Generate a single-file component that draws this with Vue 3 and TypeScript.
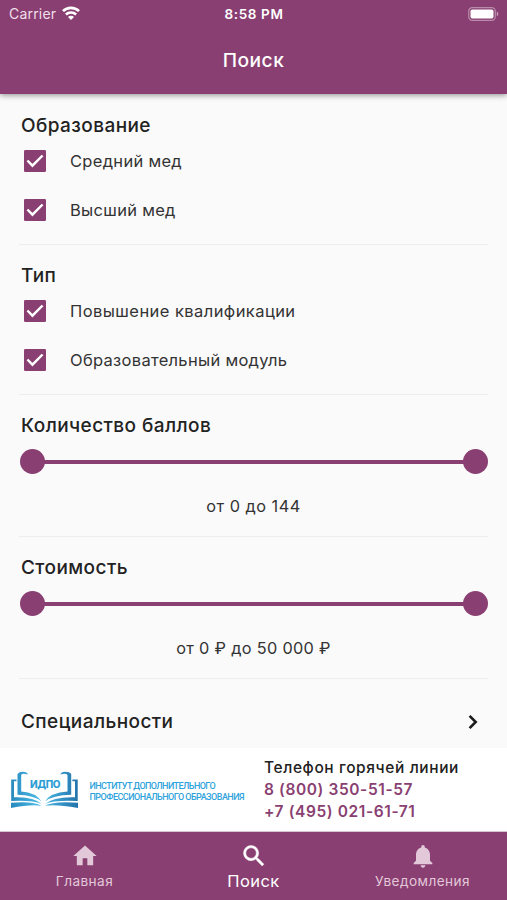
<script setup lang="ts">
interface CheckGroup {
  title: string
  cls: string
  options: { label: string; checked: boolean; cls: string }[]
}
interface RangeGroup {
  title: string
  value: string
  cls: string
}

const checkGroups: CheckGroup[] = [
  {
    title: 'Образование',
    cls: 'education',
    options: [
      { label: 'Средний мед', checked: true, cls: 'o1' },
      { label: 'Высший мед', checked: true, cls: 'o2' },
    ],
  },
  {
    title: 'Тип',
    cls: 'kind',
    options: [
      { label: 'Повышение квалификации', checked: true, cls: 'o3' },
      { label: 'Образовательный модуль', checked: true, cls: 'o4' },
    ],
  },
]

const rangeGroups: RangeGroup[] = [
  { title: 'Количество баллов', value: 'от 0 до 144', cls: 'points' },
  { title: 'Стоимость', value: 'от 0 ₽ до 50 000 ₽', cls: 'price' },
]
</script>

<template>
  <div class="screen">
    <header class="header">
      <div class="status">
        <div class="carrier">
          <span>Carrier</span>
          <svg class="wifi" viewBox="0 0 18 14" fill="none" stroke="#fff">
            <path d="M1 5.1a11.4 11.4 0 0 1 16 0" stroke-width="2.7" />
            <path d="M3.9 8.5a7.2 7.2 0 0 1 10.2 0" stroke-width="2.5" />
            <path d="M9 14 6 11a4.2 4.2 0 0 1 6 0z" fill="#fff" stroke="none" />
          </svg>
        </div>
        <span class="clock">8:58 PM</span>
        <div class="battery-wrap">
          <svg class="battery" viewBox="0 0 31 14">
            <rect x=".7" y=".7" width="26.6" height="12.6" rx="3.6" fill="none" stroke="#fff" stroke-opacity=".4" stroke-width="1.2" />
            <rect x="2.5" y="2.4" width="23" height="9.2" rx="1.8" fill="#fff" />
            <path d="M28.8 4.6c2 .9 2 3.9 0 4.8z" fill="#fff" fill-opacity=".5" />
          </svg>
        </div>
      </div>
      <h1 class="title">Поиск</h1>
    </header>

    <main class="content">
      <section v-for="g in checkGroups" :key="g.title" class="group checks" :class="g.cls">
        <h2>{{ g.title }}</h2>
        <label v-for="o in g.options" :key="o.label" class="option">
          <svg class="box" viewBox="3 3 18 18">
            <rect x="3" y="3" width="18" height="18" rx="1" fill="#8a3f72" />
            <path v-if="o.checked" d="M5.8 11.6l4.1 4.2 8.3-8.3" fill="none" stroke="#fff" stroke-width="2" />
          </svg>
          <span :class="o.cls">{{ o.label }}</span>
        </label>
      </section>

      <section v-for="r in rangeGroups" :key="r.title" class="group range" :class="r.cls">
        <h2>{{ r.title }}</h2>
        <div class="slider">
          <span class="thumb"></span>
          <span class="track"></span>
          <span class="thumb"></span>
        </div>
        <p class="value">{{ r.value }}</p>
      </section>

      <div class="link-row">
        <h2>Специальности</h2>
        <svg class="chevron" viewBox="0 0 10 16" fill="none" stroke="#1b1b1b" stroke-width="2.6">
          <path d="M1.6 1.9 7.7 8l-6.1 6.1" />
        </svg>
      </div>
    </main>

    <aside class="hotline">
      <div class="brand">
        <svg class="logo" viewBox="10 771 69 39">
          <defs>
            <linearGradient id="book" x1="10" x2="78" y1="0" y2="0" gradientUnits="userSpaceOnUse">
              <stop offset="0" stop-color="#2787bb" />
              <stop offset=".45" stop-color="#4dbdea" />
              <stop offset="1" stop-color="#2273ab" />
            </linearGradient>
          </defs>
          <g fill="url(#book)">
            <path d="M28 774.500Q22 772.800 21.200 775V791.500Q36 792.500 41.500 801.500 34 795.300 17.500 794.800V774Q19 771.800 23 771.800 27 771.900 28 774.500z" />
            <path d="M60.500 774.500Q66 772.800 67.500 775V791.500Q50.500 792.500 45 801.500 52.500 795.300 71.200 794.800V774Q69.500 771.800 65 771.800 61 771.900 60.500 774.500z" />
            <path d="M16.500 779.500V781.200H14V797.200Q34 796.500 41.500 804 33 800 11.200 801V779.500z" />
            <path d="M72.400 779.500V781.200H75V797.200Q53.500 796.500 45 804 53.500 800 77.700 801V779.500z" />
            <path d="M11 802.700Q33 800.700 41.500 805.800 31 804 11 808z" />
            <path d="M78 802.700Q53.500 800.700 45 805.800 55.500 804 78 808z" />
          </g>
          <text x="30" y="788" class="acronym">ИДПО</text>
        </svg>
        <div class="names">
          <span class="n1">ИНСТИТУТ ДОПОЛНИТЕЛЬНОГО</span>
          <span class="n2">ПРОФЕССИОНАЛЬНОГО ОБРАЗОВАНИЯ</span>
        </div>
      </div>
      <div class="phones">
        <span class="caption">Телефон горячей линии</span>
        <a class="p1">8 (800) 350-51-57</a>
        <a class="p2">+7 (495) 021-61-71</a>
      </div>
    </aside>

    <nav class="tabs">
      <div class="tab">
        <svg viewBox="0 0 24 24"><path d="M10 20v-6h4v6h5v-8h3L12 3 2 12h3v8z" /></svg>
        <span class="t1">Главная</span>
      </div>
      <div class="tab active">
        <svg viewBox="0 0 24 24" stroke="#fff" stroke-width=".4"><path d="M15.500 14h-.79l-.28-.27A6.471 6.471 0 0 0 16 9.500 6.500 6.500 0 1 0 9.500 16c1.610 0 3.090-.59 4.230-1.570l.27.28v.79l5 4.990L20.490 19l-4.990-5zm-6 0C7.010 14 5 11.990 5 9.500S7.010 5 9.500 5 14 7.010 14 9.500 11.990 14 9.500 14z" /></svg>
        <span class="t2">Поиск</span>
      </div>
      <div class="tab">
        <svg viewBox="0 0 24 24"><path d="M12 22c1.100 0 2-.9 2-2h-4c0 1.100.89 2 2 2zm6-6v-5c0-3.070-1.640-5.640-4.500-6.320V4c0-.83-.67-1.500-1.500-1.500s-1.500.67-1.500 1.500v.68C7.630 5.360 6 7.920 6 11v5l-2 2v1h16v-1l-2-2z" /></svg>
        <span class="t3">Уведомления</span>
      </div>
    </nav>
  </div>
</template>

<style>
body {
  margin: 0;
}
</style>

<style scoped>
.screen {
  width: 507px;
  height: 900px;
  display: flex;
  flex-direction: column;
  overflow: hidden;
  background: #fafafa;
  color: #222;
  font-family: Inter, 'Noto Sans', sans-serif;
}
h1,
h2,
p {
  margin: 0;
}
.header {
  flex: none;
  height: 94px;
  background: #8a3f72;
  color: #fff;
  box-shadow: 0 1px 6px rgba(0, 0, 0, 0.45);
}
.status {
  display: grid;
  grid-template-columns: 1fr auto 1fr;
  align-items: center;
  height: 27px;
  padding: 0 8px 0 9px;
}
.carrier {
  display: flex;
  align-items: center;
  gap: 6px;
  font-size: 14px;
  letter-spacing: 0.2px;
  color: #f0dfea;
}
.wifi {
  width: 18px;
  height: 14px;
  margin-top: -2px;
}
.clock {
  font-size: 13.5px;
  font-weight: 600;
  letter-spacing: 0.65px;
}
.battery-wrap {
  display: flex;
  justify-content: flex-end;
}
.battery {
  width: 31px;
  height: 14px;
}
.title {
  height: 66px;
  line-height: 67px;
  text-align: center;
  font-size: 19.2px;
  font-weight: 500;
  letter-spacing: 0.5px;
}
.content {
  flex: 1;
  min-height: 0;
  padding: 0 19px;
}
h2 {
  padding-left: 2px;
  font-size: 19px;
  line-height: 24px;
  font-weight: 500;
  letter-spacing: 0.42px;
}
.group {
  box-sizing: border-box;
  border-bottom: 1px solid #ededed;
}
.group h2 {
  line-height: 26px;
  margin-bottom: -2px;
}
.checks {
  height: 150px;
  padding-top: 18px;
}
.education {
  height: 151px;
  padding-top: 19px;
}
.option {
  display: flex;
  align-items: center;
  gap: 24px;
  height: 49px;
  padding-left: 5px;
  font-size: 16.5px;
  color: #333;
}
h2 + .option {
  height: 48px;
}
.box {
  width: 22px;
  height: 22px;
}
.o1,
.o2,
.o4 {
  letter-spacing: 0.3px;
}
.o3 {
  letter-spacing: 0.43px;
}
.range {
  height: 142px;
  padding-top: 18px;
}
.slider {
  display: flex;
  align-items: center;
  height: 25px;
  padding: 0 0 0 1px;
  margin-top: 14px;
}
.group h2 + .slider {
  margin-top: 12px;
}
.thumb {
  width: 25px;
  height: 25px;
  border-radius: 50%;
  background: #8a3f72;
}
.track {
  flex: 1;
  height: 4px;
  margin: 0 -2px;
  background: #8a3f72;
}
.range h2 {
  margin-bottom: 0;
}
.range h2 + .slider {
  margin-top: 10px;
}
.value {
  margin-top: 20px;
  line-height: 24px;
  text-align: center;
  font-size: 16.3px;
  letter-spacing: 0.5px;
  color: #333;
}
.price .value {
  letter-spacing: 0.32px;
}
.link-row {
  display: flex;
  align-items: center;
  justify-content: space-between;
  height: 86px;
  padding-right: 10px;
}
.chevron {
  width: 10px;
  height: 16px;
}
.hotline {
  flex: none;
  display: flex;
  height: 83px;
  border-bottom: 1px solid #d8c3d0;
  background: #fff;
}
.brand {
  display: flex;
  align-items: flex-start;
  width: 254px;
}
.logo {
  flex: none;
  width: 69px;
  height: 39px;
  margin: 23px 0 0 10px;
}
.acronym {
  font: 800 10px Inter, sans-serif;
  letter-spacing: -0.4px;
  fill: #2d9ed5;
}
.names {
  display: flex;
  flex-direction: column;
  margin: 33px 0 0 10.5px;
  font: 500 9px Roboto, sans-serif;
  line-height: 11px;
  white-space: nowrap;
  color: #2fa3dc;
}
.n1 {
  letter-spacing: -0.57px;
}
.n2 {
  letter-spacing: -0.52px;
}
.phones {
  display: flex;
  flex-direction: column;
  padding: 9px 0 0 10px;
  font-size: 15.5px;
  line-height: 22px;
  font-weight: 600;
  letter-spacing: 0.6px;
  white-space: nowrap;
}
.caption {
  font-weight: 500;
}
.phones a {
  color: #8a3f72;
}
.tabs {
  flex: none;
  display: grid;
  grid-template-columns: repeat(3, 1fr);
  height: 68px;
  background: #8a3f72;
}
.tab {
  display: flex;
  flex-direction: column;
  align-items: center;
  padding-top: 10px;
  font-size: 13.6px;
  line-height: 20px;
  letter-spacing: 0.45px;
  color: #e2c8d9;
}
.tab svg {
  width: 28px;
  height: 28px;
  fill: currentColor;
}
.tab span {
  margin-top: 1px;
}
.tab.active {
  color: #fff;
  font-size: 16.5px;
}
</style>
